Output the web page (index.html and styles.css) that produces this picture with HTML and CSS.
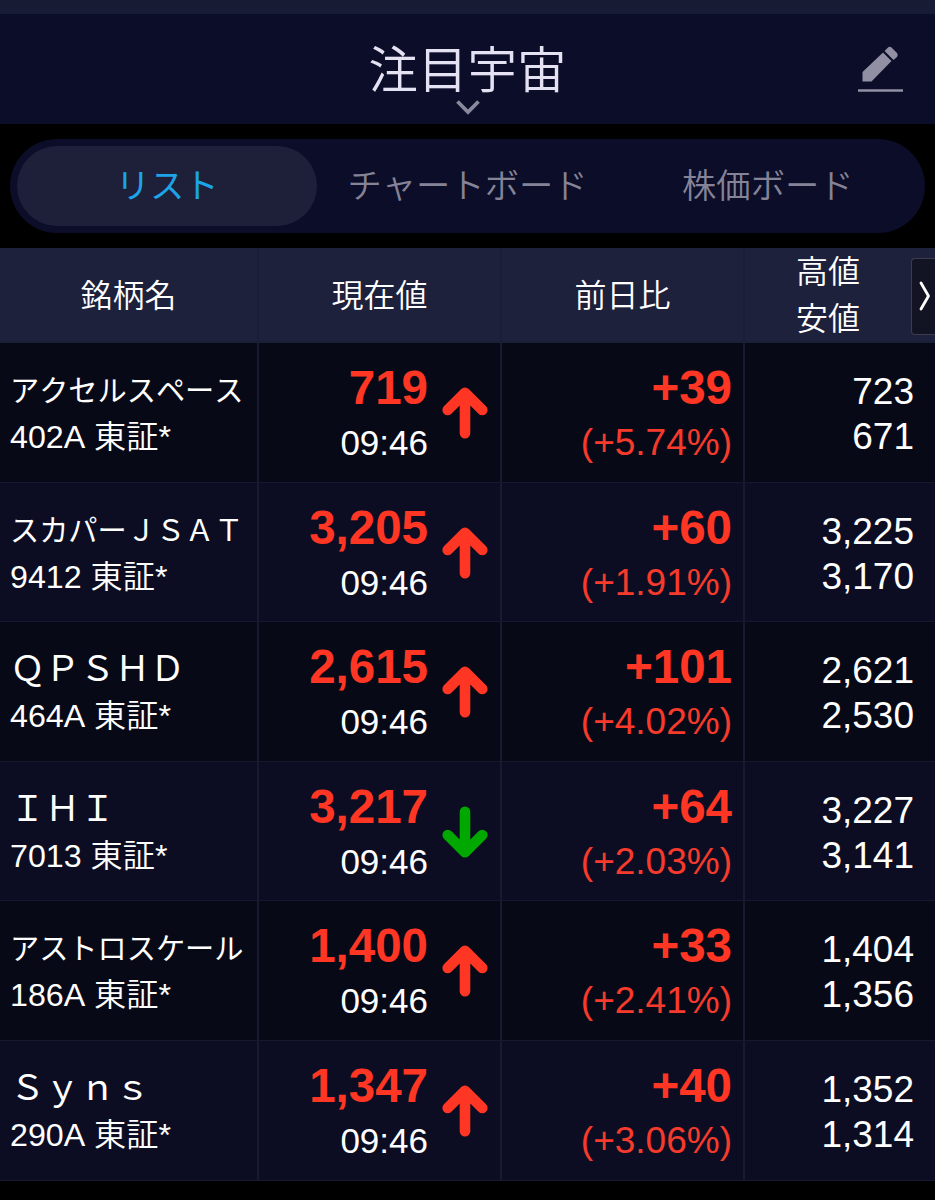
FILE: index.html
```
<!DOCTYPE html>
<html lang="ja">
<head>
  <meta charset="UTF-8" />
  <meta name="viewport" content="width=device-width, initial-scale=1.0" />
  <title>注目宇宙</title>
  <link rel="stylesheet" href="styles.css">
</head>
<body>
  <svg width="0" height="0" class="defs">
    <symbol id="arrow" viewBox="0 0 46 52">
      <path d="M23 46.3V6M5.7 23L23 5.7L40.3 23" fill="none" stroke="currentColor" stroke-width="10.6" stroke-linecap="round" stroke-linejoin="round"/>
    </symbol>
  </svg>

  <header class="header">
    <div class="title">
      <h1>注目宇宙</h1>
      <svg class="chevron" width="24" height="15" viewBox="0 0 24 15"><path d="M1.5 1.5L12 12L22.5 1.5" fill="none" stroke="#8a889d" stroke-width="3.8"/></svg>
    </div>
    <svg class="edit" width="46" height="48" viewBox="0 0 46 48">
      <path d="M5.5 26L26 6.5L34.5 15L14.5 35.5H5.5Z" fill="#918fa3"/>
      <path d="M27.5 5L30.5 2Q32.5 0 34.5 1.5L40 7Q41.500 9 40 11L36.500 14Z" fill="#918fa3"/>
      <path d="M1 44.5H46" stroke="#918fa3" stroke-width="2.4"/>
    </svg>
  </header>

  <nav class="tabs">
    <div class="tab-bar">
      <a class="tab active">リスト</a>
      <a class="tab">チャートボード</a>
      <a class="tab">株価ボード</a>
    </div>
  </nav>

  <main class="board">
    <div class="row head">
      <div class="cell">銘柄名</div>
      <div class="cell">現在値</div>
      <div class="cell">前日比</div>
      <div class="cell last">
        <span>高値<br>安値</span>
        <div class="next"><svg width="12" height="30" viewBox="0 0 12 30"><path d="M2 2L9.5 15L2 28" fill="none" stroke="#fff" stroke-width="2.8" stroke-linecap="round" stroke-linejoin="round"/></svg></div>
      </div>
    </div>

    <div class="row">
      <div class="cell name"><b class="small">アクセルスペース</b><span>402A 東証*</span></div>
      <div class="cell price"><div><strong>719</strong><time>09:46</time></div><svg class="arrow up"><use href="#arrow"/></svg></div>
      <div class="cell change"><strong>+39</strong><span>(+5.74%)</span></div>
      <div class="cell range"><span>723</span><span>671</span></div>
    </div>

    <div class="row">
      <div class="cell name"><b class="small">スカパーＪＳＡＴ</b><span>9412 東証*</span></div>
      <div class="cell price"><div><strong>3,205</strong><time>09:46</time></div><svg class="arrow up"><use href="#arrow"/></svg></div>
      <div class="cell change"><strong>+60</strong><span>(+1.91%)</span></div>
      <div class="cell range"><span>3,225</span><span>3,170</span></div>
    </div>

    <div class="row">
      <div class="cell name"><b>ＱＰＳＨＤ</b><span>464A 東証*</span></div>
      <div class="cell price"><div><strong>2,615</strong><time>09:46</time></div><svg class="arrow up"><use href="#arrow"/></svg></div>
      <div class="cell change"><strong>+101</strong><span>(+4.02%)</span></div>
      <div class="cell range"><span>2,621</span><span>2,530</span></div>
    </div>

    <div class="row">
      <div class="cell name"><b>ＩＨＩ</b><span>7013 東証*</span></div>
      <div class="cell price"><div><strong>3,217</strong><time>09:46</time></div><svg class="arrow down"><use href="#arrow"/></svg></div>
      <div class="cell change"><strong>+64</strong><span>(+2.03%)</span></div>
      <div class="cell range"><span>3,227</span><span>3,141</span></div>
    </div>

    <div class="row">
      <div class="cell name"><b class="small">アストロスケール</b><span>186A 東証*</span></div>
      <div class="cell price"><div><strong>1,400</strong><time>09:46</time></div><svg class="arrow up"><use href="#arrow"/></svg></div>
      <div class="cell change"><strong>+33</strong><span>(+2.41%)</span></div>
      <div class="cell range"><span>1,404</span><span>1,356</span></div>
    </div>

    <div class="row">
      <div class="cell name"><b>Ｓｙｎｓ</b><span>290A 東証*</span></div>
      <div class="cell price"><div><strong>1,347</strong><time>09:46</time></div><svg class="arrow up"><use href="#arrow"/></svg></div>
      <div class="cell change"><strong>+40</strong><span>(+3.06%)</span></div>
      <div class="cell range"><span>1,352</span><span>1,314</span></div>
    </div>
  </main>
</body>
</html>
```
FILE: styles.css
```
* {
  box-sizing: border-box;
}

body {
  margin: 0;
  height: 1200px;
  overflow: hidden;
  background-color: #000;
  color: #fff;
  font-family: "Liberation Sans", "Noto Sans CJK JP", sans-serif;
  font-weight: 350;
  font-kerning: none;
}

.defs {
  display: block;
}

/* header */
.header {
  position: relative;
  height: 124px;
  border-top: 14px solid #171c34;
  background-color: #0c0d28;
}

.title {
  display: flex;
  flex-direction: column;
  align-items: center;
  padding-top: 27px;
}

h1 {
  margin: 0;
  font-size: 49.5px;
  line-height: 59px;
  font-weight: 350;
  color: #e4e1f2;
}

.chevron {
  display: block;
}

.edit {
  position: absolute;
  top: 32px;
  right: 32px;
}

/* tabs */
.tabs {
  height: 124px;
  padding: 15px 10px;
}

.tab-bar {
  display: flex;
  height: 94px;
  padding: 7px;
  border-radius: 47px;
  background-color: #0c0d28;
}

.tab {
  flex: 1;
  border-radius: 40px;
  font-size: 34.3px;
  line-height: 81px;
  text-align: center;
  color: #858398;
}

.tab.active {
  background-color: #1e1f38;
  color: #1da4e8;
  font-weight: 400;
}

/* board */
.row {
  display: grid;
  grid-template-columns: 259px 243px 243px 190px;
  height: 139.6px;
  background-color: #080917;
  border-bottom: 1px solid #15182f;
}

.row:nth-child(odd) {
  background-color: #0c0d22;
}

.cell {
  display: flex;
  border-right: 2px solid #181a31;
}

.cell:last-child {
  border-right: none;
}

.row.head {
  height: 95px;
  background-color: #1e213b;
  border-bottom: 2px solid #1b1f38;
}

.head .cell {
  align-items: center;
  justify-content: center;
  padding-top: 1px;
  border-color: #1a1d37;
  font-size: 32px;
  line-height: 47px;
}

.head .last {
  justify-content: flex-end;
}

.next {
  display: flex;
  align-items: center;
  justify-content: center;
  width: 24px;
  height: 77px;
  margin-left: 51px;
  padding-left: 3px;
  border: 1px solid #3b3c4c;
  border-right: none;
  border-radius: 4px 0 0 4px;
  background-color: #131423;
}

.name {
  flex-direction: column;
  padding: 24px 0 0 10px;
  white-space: nowrap;
}

.name b {
  height: 46px;
  font-size: 35px;
  line-height: 46px;
  font-weight: 400;
}

.name .small {
  font-size: 29.2px;
  line-height: 49px;
}

.name span {
  font-size: 32.2px;
  line-height: 48px;
}

strong,
time {
  display: block;
}

strong {
  font-size: 47.5px;
  line-height: 56px;
  font-weight: bold;
  color: #ff3624;
}

.price {
  justify-content: flex-end;
  padding: 17px 12px 0 0;
  text-align: right;
}

time {
  font-size: 35px;
  line-height: 54px;
}

.arrow {
  width: 46px;
  height: 52px;
  margin: 27px 0 0 14px;
}

.up {
  color: #ff3624;
}

.down {
  color: #00a800;
  transform: rotate(180deg);
}

.change {
  flex-direction: column;
  padding: 17px 11px 0 0;
  text-align: right;
  color: #f63a2c;
}

.change span {
  font-size: 37px;
  line-height: 54px;
}

.range {
  flex-direction: column;
  padding: 26px 21px 0 0;
  font-size: 37px;
  line-height: 45px;
  text-align: right;
}
```
